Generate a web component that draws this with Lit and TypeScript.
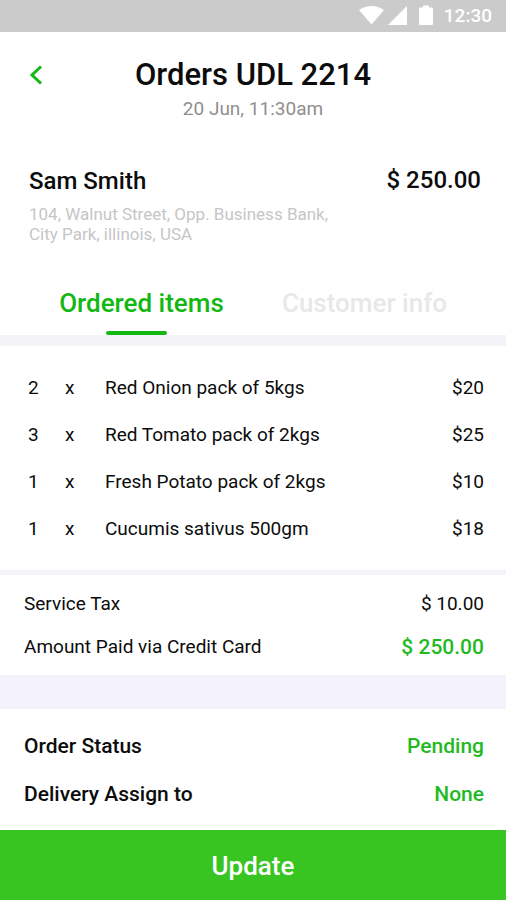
import { LitElement, html, css } from "lit";
import { customElement, state } from "lit/decorators.js";

interface OrderItem {
  qty: number;
  name: string;
  price: string;
}

const ITEMS: OrderItem[] = [
  { qty: 2, name: "Red Onion pack of 5kgs", price: "$20" },
  { qty: 3, name: "Red Tomato pack of 2kgs", price: "$25" },
  { qty: 1, name: "Fresh Potato pack of 2kgs", price: "$10" },
  { qty: 1, name: "Cucumis sativus 500gm", price: "$18" },
];

const TABS = ["Ordered items", "Customer info"];

@customElement("status-bar")
class StatusBar extends LitElement {
  static styles = css`
    :host {
      display: flex;
      justify-content: flex-end;
      align-items: center;
      height: 32px;
      padding-right: 14px;
      background: #cbcbcb;
      color: #fff;
      font-size: 19px;
      font-weight: 500;
      line-height: 32px;
    }
    .icons {
      display: block;
      margin-right: 10px;
    }
  `;

  render() {
    return html`
      <svg class="icons" width="75" height="24" viewBox="0 0 75 24" fill="#fff" aria-hidden="true">
        <path d="M12.500 20.500 L0 6 Q12.500 -2 25 6 Z" />
        <path d="M29 21 L48 2 V21 Z" />
        <path d="M61 3.500 h3 v-2 h6 v2 h3 q1 0 1 1 v15.500 q0 1 -1 1 h-12 q-1 0 -1 -1 v-15.500 q0 -1 1 -1 Z" />
      </svg>
      <span>12:30</span>
    `;
  }
}

@customElement("app-root")
class AppRoot extends LitElement {
  @state() private activeTab = 0;

  static styles = css`
    :host {
      display: flex;
      flex-direction: column;
      min-height: 100vh;
      background: #fff;
      color: #0c0c0c;
      font-family: Roboto, "Liberation Sans", sans-serif;
      font-size: 19px;
      line-height: 24px;
    }
    * {
      box-sizing: border-box;
    }
    h1, h2, p, dl, dd, dt {
      margin: 0;
      font-weight: inherit;
    }
    button {
      border: 0;
      padding: 0;
      background: none;
      font: inherit;
      cursor: pointer;
    }
    .header {
      display: grid;
      grid-template-columns: 24px 1fr 24px;
      align-items: center;
      padding: 25px 24px 0;
      text-align: center;
    }
    .back {
      display: flex;
      align-items: center;
      justify-content: center;
      height: 36px;
    }
    .title {
      font-size: 31px;
      line-height: 36px;
      font-weight: 500;
    }
    .date {
      grid-column: 2;
      margin-top: 4px;
      color: #8f8f8f;
    }
    .customer {
      display: flex;
      justify-content: space-between;
      padding: 46px 25px 0 29px;
    }
    .name, .amount {
      font-size: 24px;
      font-weight: 500;
      line-height: 26px;
    }
    .name {
      line-height: 28px;
    }
    .address {
      margin-top: 9px;
      font-size: 17px;
      line-height: 20px;
      color: #c6c6c6;
    }
    .tabs {
      display: flex;
      padding: 0 30px;
      margin-top: 26px;
    }
    .tab {
      position: relative;
      flex: 1;
      height: 65px;
      font-size: 26px;
      font-weight: 500;
      color: #e8e8e8;
    }
    .tab.active {
      color: #12b812;
    }
    .tab.active::after {
      content: "";
      position: absolute;
      bottom: 0;
      left: calc(50% - 36px);
      width: 61px;
      height: 4px;
      border-radius: 2px;
      background: #12b812;
    }
    .band {
      background: #f4f4f8;
    }
    .band.medium {
      height: 11px;
    }
    .band.thin {
      height: 5px;
    }
    .band.thick {
      height: 34px;
      background: #f3f2fb;
    }
    .items {
      padding: 18px 22px 18px 28px;
    }
    .table {
      width: 100%;
      border-collapse: collapse;
    }
    .table td {
      height: 47px;
      padding: 0;
    }
    .qty {
      width: 37px;
    }
    .times {
      width: 40px;
    }
    .price {
      text-align: right;
    }
    .rows {
      display: flex;
      flex-direction: column;
      padding: 17px 22px 16px 24px;
      gap: 19px;
    }
    .rows.status {
      padding: 25px 22px 24px 24px;
      gap: 24px;
      font-size: 21px;
      font-weight: 500;
    }
    .row {
      display: flex;
      justify-content: space-between;
    }
    .green {
      color: #1fba1f;
    }
    .paid {
      font-size: 21px;
      font-weight: 500;
    }
    .update {
      height: 70px;
      padding-top: 2px;
      margin-top: auto;
      background: #38c522;
      color: #fff;
      font-size: 26px;
      font-weight: 500;
    }
  `;

  render() {
    return html`
      <status-bar></status-bar>
      <header class="header">
        <button class="back" aria-label="Back">
          <svg width="14" height="20" viewBox="0 0 14 20" fill="none" stroke="#12b812" stroke-width="3">
            <path d="M12 1.500 L3 10 L12 18.500" />
          </svg>
        </button>
        <h1 class="title">Orders UDL 2214</h1>
        <p class="date">20 Jun, 11:30am</p>
      </header>
      <section class="customer">
        <div>
          <h2 class="name">Sam Smith</h2>
          <p class="address">104, Walnut Street, Opp. Business Bank,<br />City Park, illinois, USA</p>
        </div>
        <p class="amount">$ 250.00</p>
      </section>
      <div class="tabs" role="tablist">
        ${TABS.map(
          (label, i) => html`
            <button
              class="tab ${i === this.activeTab ? "active" : ""}"
              role="tab"
              aria-selected=${i === this.activeTab}
              @click=${() => (this.activeTab = i)}
            >${label}</button>
          `
        )}
      </div>
      <div class="band medium"></div>
      <section class="items">
        <table class="table" aria-label="Ordered items">
          <tbody>
            ${ITEMS.map(
              (item) => html`
                <tr>
                  <td class="qty">${item.qty}</td>
                  <td class="times">x</td>
                  <td>${item.name}</td>
                  <td class="price">${item.price}</td>
                </tr>
              `
            )}
          </tbody>
        </table>
      </section>
      <div class="band thin"></div>
      <dl class="rows">
        <div class="row"><dt>Service Tax</dt><dd>$ 10.00</dd></div>
        <div class="row"><dt>Amount Paid via Credit Card</dt><dd class="paid green">$ 250.00</dd></div>
      </dl>
      <div class="band thick"></div>
      <dl class="rows status">
        <div class="row"><dt>Order Status</dt><dd class="green">Pending</dd></div>
        <div class="row"><dt>Delivery Assign to</dt><dd class="green">None</dd></div>
      </dl>
      <button class="update">Update</button>
    `;
  }
}
